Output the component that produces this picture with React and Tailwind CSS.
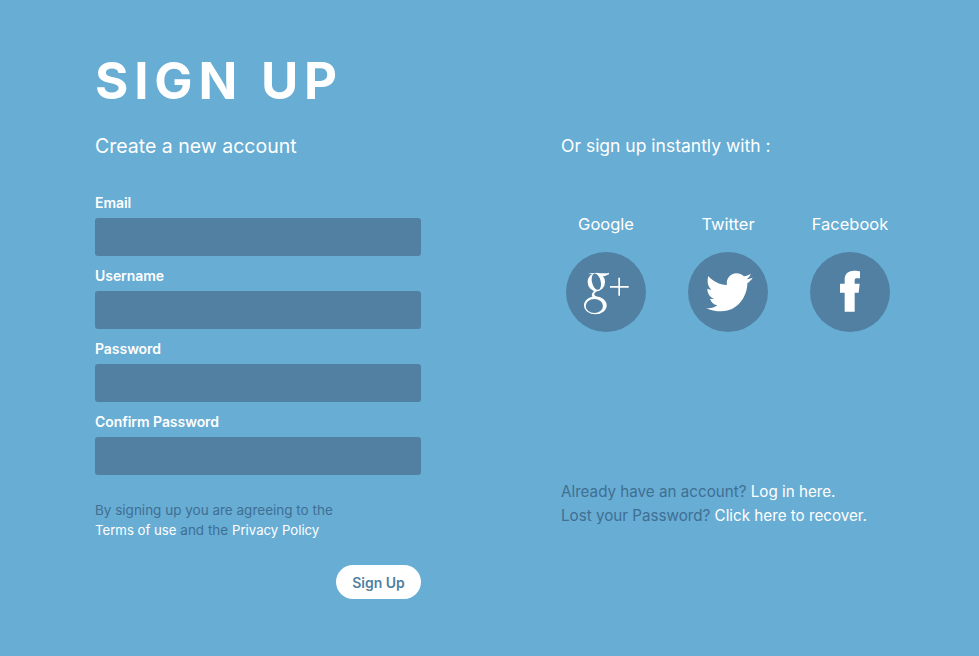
import React from 'react';

const font = "font-['Inter','Liberation_Sans',sans-serif]";

const Field = ({ label }) => (
  <div className="h-[73px]">
    <label className="block h-[27px] text-[14px] leading-[24px] font-semibold tracking-[-0.05px] text-white">{label}</label>
    <input type="text" className="block w-full h-[38px] rounded-[3px] bg-[#5180a2] outline-none" />
  </div>
);

// all three icons are drawn on a 240 unit box that covers the circle
const GooglePlus = () => (
  <svg width="80" height="80" viewBox="18 18 240 240">
    <path d="M85 82h58l4 -2v5l-14 6h-20z" fill="#fff" />
    <ellipse cx="109" cy="108" rx="26" ry="28" fill="#fff" />
    <ellipse cx="109" cy="107" rx="13" ry="25" fill="#5180a2" transform="rotate(-14 109 107)" />
    <path d="M112 134c-9 6 -11 10 -8 14c6 8 30 12 34 30l-9 0c-4 -10 -29 -14 -33 -28c-2 -7 4 -14 12 -18z" fill="#fff" />
    <ellipse cx="106" cy="178" rx="34" ry="27" fill="#fff" />
    <ellipse cx="103" cy="180" rx="26" ry="21" fill="#5180a2" />
    <path d="M150 120h56v5h-56zM175 95h5v54h-5z" fill="#fff" />
  </svg>
);

const TwitterBird = () => (
  <svg width="80" height="80" viewBox="18 18 240 240">
    <path
      d="M72 186C84 188 96 186 106 178C94 176 87 168 84 158C88 159 92 159 96 158C84 154 76 142 76 128C80 130 84 131 88 131C78 122 74 106 79 90C92 106 112 116 135 117C131 98 146 82 163 82C172 82 180 85 186 91C193 90 200 87 206 83C204 90 199 96 194 100C200 99 206 97 212 95C208 102 202 107 196 112C196 150 168 196 118 196C101 196 85 193 72 186Z"
      fill="#fff"
    />
  </svg>
);

const FacebookF = () => (
  <svg width="80" height="80" viewBox="18 18 240 240">
    <path d="M122 197V140H108V113H122V100C122 82 135 74 150 74C158 74 165 75 168 76V97H158C152 97 152 101 152 106V113H167L164 140H152V197Z" fill="#fff" />
  </svg>
);

const Social = ({ name, children }) => (
  <div className="w-[122px] flex flex-col items-center">
    <div className="h-[24px] text-[16.500px] leading-[24px] text-white">{name}</div>
    <div className="mt-[16px] w-[80px] h-[80px] rounded-full bg-[#5180a2]">{children}</div>
  </div>
);

export default function App() {
  return (
    <div className={`${font} w-[979px] h-[656px] overflow-hidden bg-[#68add4] flex`}>
      {/* left column */}
      <div className="ml-[95px] w-[326px] pt-[51px]">
        <h1 className="text-[51px] leading-[60px] font-bold tracking-[5.800px] text-white whitespace-nowrap">SIGN UP</h1>
        <h2 className="mt-[20px] text-[19.500px] leading-[30px] text-white whitespace-nowrap">Create a new account</h2>
        <div className="mt-[30px]">
          <Field label="Email" />
          <Field label="Username" />
          <Field label="Password" />
          <Field label="Confirm Password" />
        </div>
        <p className="mt-[17px] text-[13.500px] leading-[20px] text-[#3f6f93] whitespace-nowrap">
          By signing up you are agreeing to the
          <br />
          <a className="text-[13.200px] text-white">Terms of use</a> and the <a className="text-[13.200px] text-white">Privacy Policy</a>
        </p>
        <div className="mt-[25px] flex justify-end">
          <button className="w-[85px] h-[34px] rounded-full bg-white text-[14px] font-semibold text-[#5180a2]">Sign Up</button>
        </div>
      </div>
      {/* right column */}
      <div className="ml-[140px] pt-[131px]">
        <h3 className="text-[17.500px] leading-[30px] text-white whitespace-nowrap">Or sign up instantly with :</h3>
        <div className="mt-[51px] -ml-[16px] flex">
          <Social name="Google"><GooglePlus /></Social>
          <Social name="Twitter"><TwitterBird /></Social>
          <Social name="Facebook"><FacebookF /></Social>
        </div>
        <p className="mt-[148px] text-[15.200px] leading-[24px] text-[#3f6f93] whitespace-nowrap">
          Already have an account? <a className="text-white">Log in here.</a>
          <br />
          Lost your Password? <a className="text-white">Click here to recover.</a>
        </p>
      </div>
    </div>
  );
}
